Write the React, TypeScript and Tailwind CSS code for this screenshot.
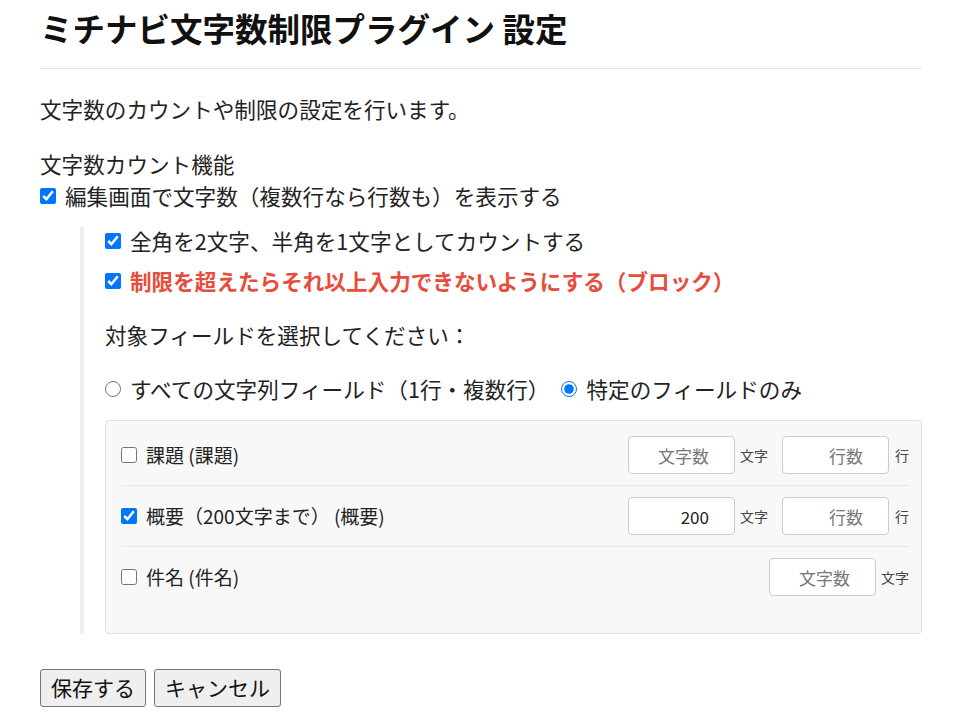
import { useState } from "react";

const font = { fontFamily: '"Noto Sans CJK JP", "Noto Sans", sans-serif' };

type Field = {
  label: string;
  checked: boolean;
  chars: string;
  multi: boolean;
};

const fields: Field[] = [
  { label: "課題 (課題)", checked: false, chars: "", multi: true },
  { label: "概要（200文字まで） (概要)", checked: true, chars: "200", multi: true },
  { label: "件名 (件名)", checked: false, chars: "", multi: false },
];

function NumInput({ value, placeholder }: { value: string; placeholder: string }) {
  return (
    <input
      type="text"
      defaultValue={value}
      placeholder={placeholder}
      className="w-[107px] h-[38px] rounded border border-[#cccccc] bg-white pr-[25px] text-right text-[17px] text-[#222] placeholder:text-[#777] outline-none"
    />
  );
}

export default function App() {
  const [mode, setMode] = useState("specific");

  return (
    <div style={font} className="pl-10 pr-[37px] text-[#222] bg-white min-h-[721px]">
      <h1 className="mt-2 text-[32.5px] font-bold leading-[40px] text-[#111]">
        ミチナビ文字数制限プラグイン 設定
      </h1>
      <hr className="mt-5 border-t border-[#e5e5e5]" />

      <p className="mt-[25px] text-[21.6px] leading-[30px]">文字数のカウントや制限の設定を行います。</p>

      <div className="mt-[25px] text-[21.6px] leading-[30px]">文字数カウント機能</div>
      <label className="mt-[2px] flex items-center gap-[9px] text-[21.6px] leading-[30px]">
        <input type="checkbox" defaultChecked className="w-4 h-4 m-0 accent-[#0075ff]" />
        編集画面で文字数（複数行なら行数も）を表示する
      </label>

      <div className="mt-4 ml-10 border-l-4 border-[#eeeeee] pl-[21px]">
        <label className="flex items-center gap-[9px] text-[21.6px] leading-[28px]">
          <input type="checkbox" defaultChecked className="w-4 h-4 m-0 accent-[#0075ff]" />
          全角を2文字、半角を1文字としてカウントする
        </label>
        <label className="mt-3 flex items-center gap-[9px] text-[21.6px] leading-[28px] font-bold text-[#e74c3c]">
          <input type="checkbox" defaultChecked className="w-4 h-4 m-0 accent-[#0075ff]" />
          制限を超えたらそれ以上入力できないようにする（ブロック）
        </label>

        <div className="mt-[25px] text-[21.6px] leading-[30px]">対象フィールドを選択してください：</div>

        <div className="mt-6 flex items-center text-[21.6px] leading-[30px]">
          <label className="flex items-center gap-[9px]">
            <input
              type="radio"
              name="mode"
              checked={mode === "all"}
              onChange={() => setMode("all")}
              className="w-4 h-4 m-0 accent-[#0075ff]"
            />
            すべての文字列フィールド（1行・複数行）
          </label>
          <label className="ml-3 flex items-center gap-[9px]">
            <input
              type="radio"
              name="mode"
              checked={mode === "specific"}
              onChange={() => setMode("specific")}
              className="w-4 h-4 m-0 accent-[#0075ff]"
            />
            特定のフィールドのみ
          </label>
        </div>

        <div className="mt-4 rounded border border-[#e0e0e0] bg-[#f8f8f8] pl-[15px] pr-3 pt-1 pb-[26px]">
          {fields.map((f, i) => (
            <div
              key={f.label}
              className={`flex items-center py-[11px] ${i < fields.length - 1 ? "border-b border-[#e6e6e6]" : ""}`}
            >
              <label className="flex items-center gap-[9px] text-[19px]">
                <input type="checkbox" defaultChecked={f.checked} className="w-4 h-4 m-0 accent-[#0075ff]" />
                {f.label}
              </label>
              <div className="ml-auto flex items-center text-[14px] text-[#444]">
                <NumInput value={f.chars} placeholder="文字数" />
                <span className="ml-[5px]">文字</span>
                {f.multi && (
                  <>
                    <span className="ml-[14px]">
                      <NumInput value="" placeholder="行数" />
                    </span>
                    <span className="ml-[6px]">行</span>
                  </>
                )}
              </div>
            </div>
          ))}
        </div>
      </div>

      <div className="mt-[35px] flex gap-2">
        <button className="h-[38px] px-[10px] rounded-[3px] border border-[#767676] bg-[#efefef] text-[21px] text-[#111]">
          保存する
        </button>
        <button className="h-[38px] px-[10px] rounded-[3px] border border-[#767676] bg-[#efefef] text-[21px] text-[#111]">
          キャンセル
        </button>
      </div>
    </div>
  );
}
